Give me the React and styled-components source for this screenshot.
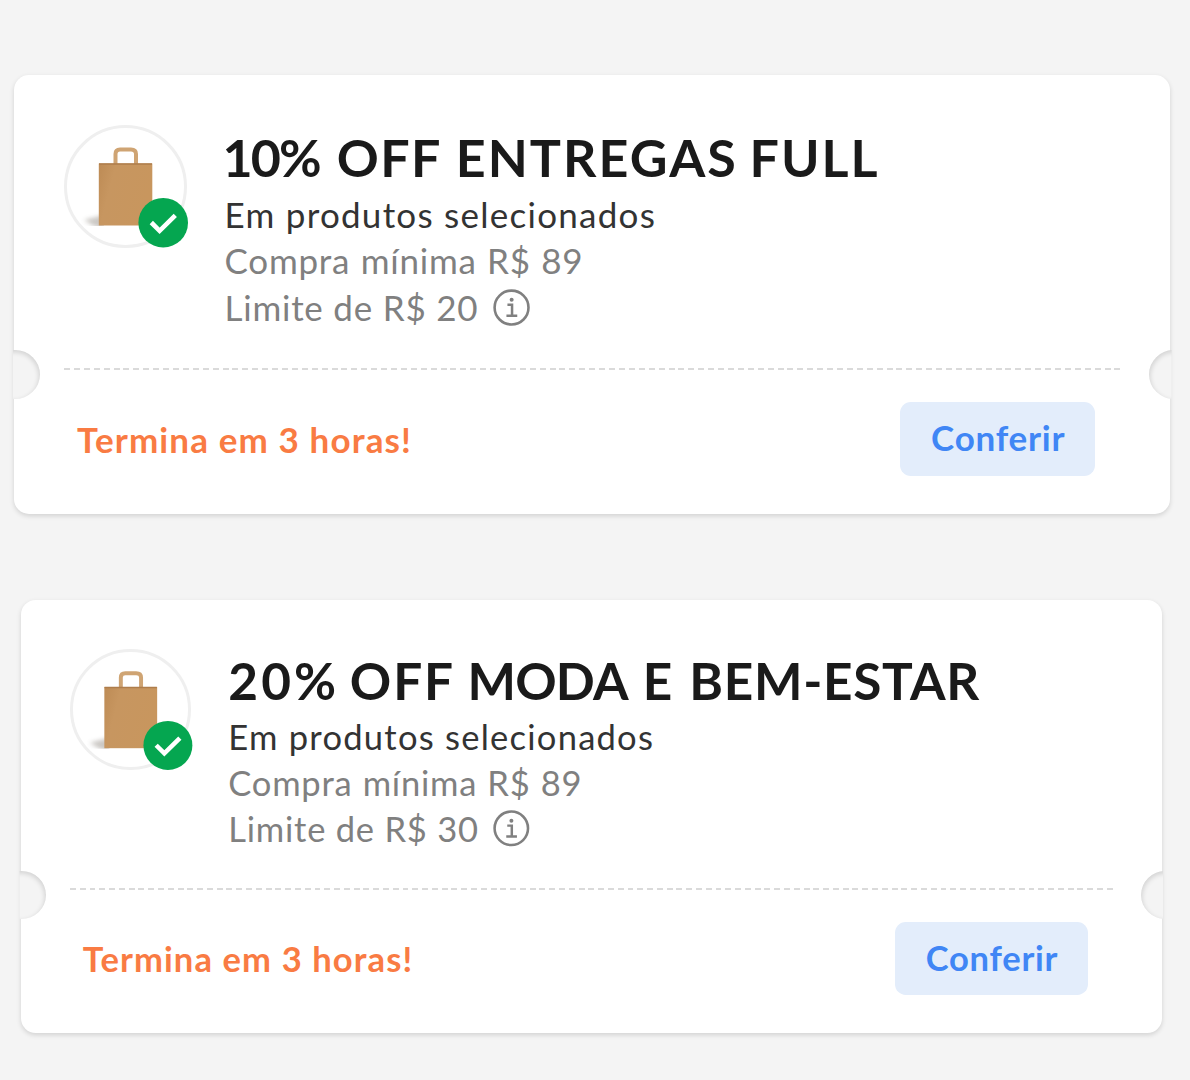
import React from "react";
import styled, { createGlobalStyle } from "styled-components";

const GlobalStyle = createGlobalStyle`
  body {
    margin: 0;
    background-color: #f4f4f4;
    font-family: Lato, "Open Sans", sans-serif;
  }
  * {
    box-sizing: border-box;
  }
`;

const StyledPage = styled.main`
  display: flex;
  flex-direction: column;
  gap: 85.7px;
  height: 1080px;
  padding: 75px 0 0 14px;
  overflow: hidden;
`;

/* everything inside a coupon is sized in em, so it scales with the unit */
const StyledCoupon = styled.article`
  position: relative;
  display: flex;
  flex-direction: column;
  font-size: ${(props) => props.$unit}px;
  width: 115.6em;
  height: 43.9em;
  margin-left: ${(props) => props.$indent}px;
  padding: 5em 4.9em 0 5em;
  background-color: #fff;
  border-radius: 1.5em;
  box-shadow: 0 2px 5px rgba(0, 0, 0, 0.14);
`;

const StyledNotch = styled.span`
  position: absolute;
  top: 27.5em;
  ${(props) => (props.$side === "left" ? "left: -2.4em" : "right: -2.9em")};
  width: 5em;
  height: 4.9em;
  border-radius: 50%;
  background-color: #f4f4f4;
  box-shadow: inset ${(props) => (props.$side === "left" ? "-1px" : "1px")} 2px
    5px rgba(0, 0, 0, 0.14);
  clip-path: ${(props) =>
    props.$side === "left" ? "inset(0 0 0 46%)" : "inset(0 55% 0 0)"};
`;

const StyledDetails = styled.div`
  display: flex;
  gap: 3.75em;
  height: 24.25em;
`;

const StyledThumb = styled.div`
  position: relative;
  flex: none;
  width: 12.3em;
  height: 12.3em;
  border: 3px solid #efefef;
  border-radius: 50%;

  svg {
    position: absolute;
    top: -3.5px;
    left: -3px;
    width: 12.5em;
    height: 12.5em;
    overflow: visible;
  }
`;

const StyledTitle = styled.h2`
  margin: 0.03em 0 0.087em;
  font-size: 5.2em;
  line-height: 1.1538em;
  font-weight: 700;
  white-space: nowrap;
  color: #1a1a1a;
`;

const StyledWord = styled.span`
  margin-left: ${(props) => props.$lead}em;
  letter-spacing: ${(props) => props.$spacing}em;
`;

const StyledText = styled.p`
  display: flex;
  align-items: center;
  margin: 0;
  font-size: 3.5em;
  line-height: 1.3143em;
  letter-spacing: ${(props) => (props.$muted ? "0.022em" : "0.036em")};
  word-spacing: ${(props) => (props.$muted ? "0.02em" : "0")};
  white-space: nowrap;
  color: ${(props) => (props.$muted ? "#808080" : "#333")};

  &:last-child {
    padding-top: 1px;
    word-spacing: 0;
  }

  svg {
    width: 1.06em;
    height: 1.06em;
    margin-left: 0.42em;
  }
`;

const StyledDivider = styled.div`
  height: 0.2em;
  background-image: repeating-linear-gradient(
    90deg,
    #dadada 0 0.6em,
    transparent 0.6em 0.991em
  );
`;

const StyledFooter = styled.footer`
  display: flex;
  justify-content: space-between;
  align-items: center;
  margin-top: 3.25em;
  padding: 0 2.6em 0 1.3em;
  height: 7.4em;
`;

const StyledDeadline = styled.span`
  font-size: 3.5em;
  font-weight: 700;
  letter-spacing: 0.032em;
  color: #f97b43;
`;

const StyledButton = styled.button`
  width: 5.5714em;
  height: 2.1143em;
  padding: 0 0 0.1em 0.04em;
  border: 0;
  border-radius: 0.31em;
  background-color: #e3edfb;
  color: #4086f5;
  font-family: inherit;
  font-size: 3.5em;
  font-weight: 700;
  letter-spacing: 0.022em;
`;

function BagIcon() {
  return (
    <svg viewBox="0 0 125 125">
      <defs>
        <linearGradient id="paper" x1="0" y1="0" x2="1" y2="0.3">
          <stop offset="0" stopColor="#bd8b55" />
          <stop offset="0.3" stopColor="#c79660" />
          <stop offset="1" stopColor="#c8965e" />
        </linearGradient>
        <filter id="soft" x="-50%" y="-50%" width="200%" height="200%">
          <feGaussianBlur stdDeviation="2" />
        </filter>
        <clipPath id="ground">
          <rect x="10" y="85" width="30" height="16" />
        </clipPath>
      </defs>
      <g clipPath="url(#ground)">
        <path
          d="M20 95 L40 90 V104 L30 101 Z"
          fill="#8d867e"
          opacity="0.45"
          filter="url(#soft)"
        />
      </g>
      <path
        d="M51.5 41 V29 Q51.5 24.5 56 24.5 H67 Q72 24.5 72 29 V41"
        fill="none"
        stroke="#cfa473"
        strokeWidth="4"
      />
      <rect x="34.8" y="38.5" width="53.5" height="62" fill="url(#paper)" />
      <path d="M35 39 H88" stroke="#ae7d4b" strokeWidth="1.4" />
      <circle cx="99.2" cy="97.7" r="24.8" fill="#05a650" />
      <path
        d="M87.3 97.5 L95.6 105.8 L111.3 90.3"
        fill="none"
        stroke="#fff"
        strokeWidth="4.6"
      />
    </svg>
  );
}

function InfoIcon() {
  return (
    <svg viewBox="0 0 37 37" fill="none" stroke="#808080">
      <circle cx="18.5" cy="18.5" r="16.9" strokeWidth="2.6" />
      <path d="M14.4 15.8 H19 V26.6 M13.4 26.8 H24.2" strokeWidth="2.5" />
      <circle cx="18.6" cy="10.8" r="2" fill="#808080" stroke="none" />
    </svg>
  );
}

function Coupon({ coupon }) {
  return (
    <StyledCoupon $unit={coupon.unit} $indent={coupon.indent}>
      <StyledNotch $side="left" />
      <StyledNotch $side="right" />
      <StyledDetails>
        <StyledThumb>
          <BagIcon />
        </StyledThumb>
        <div>
          <StyledTitle>
            {coupon.title.map((word) => (
              <React.Fragment key={word.text}>
                <StyledWord $lead={word.lead} $spacing={word.spacing}>
                  {word.text}
                </StyledWord>{" "}
              </React.Fragment>
            ))}
          </StyledTitle>
          <StyledText>Em produtos selecionados</StyledText>
          <StyledText $muted>Compra mínima R$ 89</StyledText>
          <StyledText $muted>
            Limite de R$ {coupon.limit}
            <InfoIcon />
          </StyledText>
        </div>
      </StyledDetails>
      <StyledDivider />
      <StyledFooter>
        <StyledDeadline>Termina em 3 horas!</StyledDeadline>
        <StyledButton type="button">Conferir</StyledButton>
      </StyledFooter>
    </StyledCoupon>
  );
}

const coupons = [
  {
    id: "full",
    title: [
      { text: "10%", lead: -0.038, spacing: -0.038 },
      { text: "OFF", lead: 0.086, spacing: 0.029 },
      { text: "ENTREGAS", lead: 0.019, spacing: 0.04 },
      { text: "FULL", lead: -0.02, spacing: 0.038 },
    ],
    limit: 20,
    unit: 10,
    indent: 0,
  },
  {
    id: "moda",
    title: [
      { text: "20%", lead: 0, spacing: 0.06 },
      { text: "OFF", lead: -0.035, spacing: 0.036 },
      { text: "MODA", lead: 0, spacing: -0.015 },
      { text: "E", lead: 0.05, spacing: 0 },
      { text: "BEM-ESTAR", lead: 0.085, spacing: 0.014 },
    ],
    limit: 30,
    unit: 9.87,
    indent: 6.6,
  },
];

function App() {
  return (
    <StyledPage>
      <GlobalStyle />
      {coupons.map((coupon) => (
        <Coupon key={coupon.id} coupon={coupon} />
      ))}
    </StyledPage>
  );
}

export default App;
